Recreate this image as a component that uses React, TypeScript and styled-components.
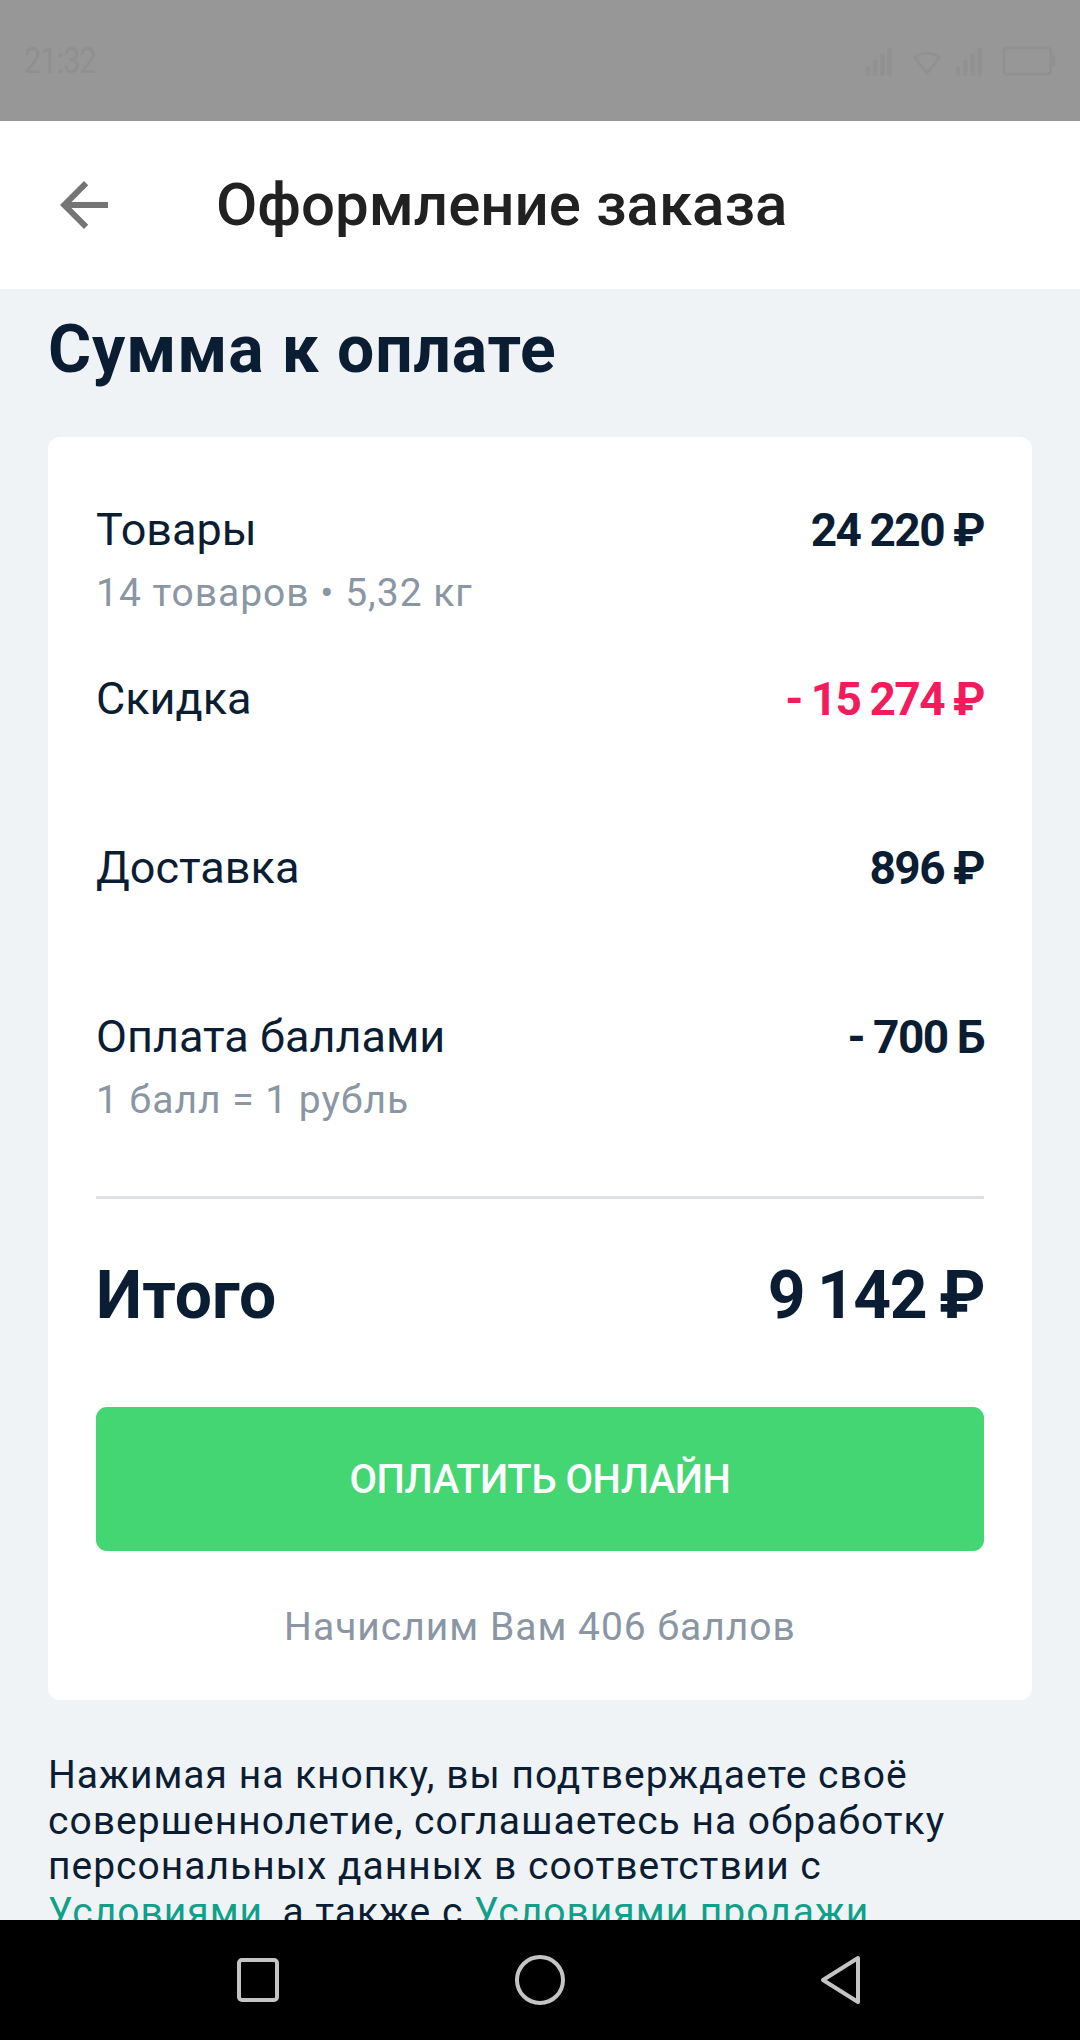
import React from "react";
import styled, { createGlobalStyle } from "styled-components";

const GlobalStyle = createGlobalStyle`
  * { box-sizing: border-box; }
  html, body { margin: 0; padding: 0; background: #eff3f6; }
  body { font-family: Roboto, "Noto Sans", "Liberation Sans", sans-serif; -webkit-font-smoothing: antialiased; }
`;

const NAVY = "#0b1d33";
const GRAY = "#8a96a3";

const Screen = styled.div`
  width: 1080px;
  height: 2040px;
  display: flex;
  flex-direction: column;
  background: #eff3f6;
  overflow: hidden;
`;

const StatusBar = styled.div`
  height: 121px;
  flex: none;
  background: #979797;
  display: flex;
  align-items: center;
  justify-content: space-between;
  padding: 0 22px 0 24px;
`;

const StatusTime = styled.span`
  font-family: "Roboto", sans-serif;
  font-size: 36px;
  color: #909090;
  letter-spacing: -1px;
  transform: scaleX(0.85);
  transform-origin: left center;
`;

const StatusIcons = styled.div`
  display: flex;
  align-items: center;
  gap: 12px;
`;

const Header = styled.header`
  height: 168px;
  flex: none;
  background: #ffffff;
  display: flex;
  align-items: center;
  padding-left: 48px;
`;

const BackButton = styled.div`
  width: 72px;
  height: 72px;
  display: flex;
  align-items: center;
  justify-content: center;
  margin-right: 96px;
`;

const HeaderTitle = styled.h1`
  margin: 0;
  font-family: Roboto, sans-serif;
  font-weight: 500;
  font-size: 60px;
  line-height: 72px;
  color: #212121;
`;

const Content = styled.main`
  flex: 1;
  min-height: 0;
  overflow: hidden;
  padding: 22px 48px 0;
  display: flex;
  flex-direction: column;
`;

const SectionTitle = styled.h2`
  margin: 0;
  font-weight: 700;
  font-size: 66px;
  line-height: 78px;
  letter-spacing: 0.9px;
  color: ${NAVY};
`;

const Card = styled.section`
  margin-top: 48px;
  background: #ffffff;
  border-radius: 12px;
  padding: 65px 48px 47px;
  display: flex;
  flex-direction: column;
`;

const Rows = styled.div`
  display: flex;
  flex-direction: column;
  gap: 52px;
`;

const Row = styled.div`
  display: grid;
  grid-template-columns: 1fr auto;
  column-gap: 24px;
`;

const RowLabel = styled.div`
  font-size: 45px;
  line-height: 56px;
  font-weight: 400;
  color: ${NAVY};
`;

const RowValue = styled.div<{ $tone?: "discount" }>`
  font-size: 46px;
  line-height: 56px;
  font-weight: 700;
  letter-spacing: -1.5px;
  word-spacing: -1px;
  text-align: right;
  white-space: nowrap;
  color: ${(p) => (p.$tone === "discount" ? "#f21b5b" : NAVY)};
`;

const RowSub = styled.div`
  grid-column: 1 / 2;
  margin-top: 9px;
  min-height: 52px;
  font-size: 39px;
  line-height: 52px;
  letter-spacing: 1px;
  color: ${GRAY};
`;

const Divider = styled.hr`
  margin: 70px 0 0;
  border: none;
  height: 3px;
  background: #dde1e5;
`;

const TotalRow = styled.div`
  margin-top: 57px;
  display: flex;
  justify-content: space-between;
  align-items: baseline;
`;

const TotalText = styled.span<{ $num?: boolean }>`
  font-size: 66px;
  line-height: 80px;
  font-weight: 700;
  color: ${NAVY};
  white-space: nowrap;
  letter-spacing: ${(p) => (p.$num ? "-1.5px" : "0")};
  word-spacing: ${(p) => (p.$num ? "-2px" : "0")};
`;

const PayButton = styled.button`
  margin-top: 71px;
  height: 144px;
  width: 100%;
  border: none;
  border-radius: 11px;
  background: #43d672;
  color: #ffffff;
  font-family: Roboto, sans-serif;
  font-weight: 500;
  font-size: 40px;
  letter-spacing: -0.5px;
  text-transform: uppercase;
  display: flex;
  align-items: center;
  justify-content: center;
  cursor: pointer;
`;

const BonusNote = styled.p`
  margin: 50px 0 0;
  text-align: center;
  font-size: 39px;
  line-height: 52px;
  letter-spacing: 1px;
  color: ${GRAY};
`;

const Legal = styled.p`
  margin: 53px 0 0;
  font-size: 39px;
  line-height: 45.7px;
  letter-spacing: 1px;
  color: ${NAVY};
`;

const LegalLink = styled.a`
  color: #0fa08a;
  text-decoration: none;
`;

const NavBar = styled.nav`
  height: 120px;
  flex: none;
  background: #000000;
  display: flex;
  align-items: center;
  padding-left: 234px;
`;

const NavKey = styled.div<{ $w: number; $gap: number }>`
  width: ${(p) => p.$w}px;
  height: 56px;
  margin-left: ${(p) => p.$gap}px;
  display: flex;
  align-items: center;
  justify-content: center;
`;

type Line = {
  label: string;
  value: string;
  sub?: string;
  tone?: "discount";
};

const lines: Line[] = [
  { label: "Товары", sub: "14 товаров • 5,32 кг", value: "24 220 ₽" },
  { label: "Скидка", value: "- 15 274 ₽", tone: "discount" },
  { label: "Доставка", value: "896 ₽" },
  { label: "Оплата баллами", sub: "1 балл = 1 рубль", value: "- 700 Б" },
];

const ICON = "#919191";

export default function App() {
  return (
    <>
      <GlobalStyle />
      <Screen>
        <StatusBar>
          <StatusTime>21:32</StatusTime>
          <StatusIcons>
            <svg width="36" height="36" viewBox="0 0 40 36">
              <rect x="2" y="24" width="5" height="10" fill={ICON} />
              <rect x="10" y="17" width="5" height="17" fill={ICON} />
              <rect x="18" y="10" width="5" height="24" fill={ICON} />
              <rect x="26" y="3" width="5" height="31" fill={ICON} />
            </svg>
            <svg width="30" height="36" viewBox="0 0 34 36">
              <path d="M17 32 L3 14 A22 22 0 0 1 31 14 Z" fill="none" stroke={ICON} strokeWidth="3" />
            </svg>
            <svg width="36" height="36" viewBox="0 0 40 36">
              <rect x="2" y="24" width="5" height="10" fill={ICON} />
              <rect x="10" y="17" width="5" height="17" fill={ICON} />
              <rect x="18" y="10" width="5" height="24" fill={ICON} />
              <rect x="26" y="3" width="5" height="31" fill={ICON} />
            </svg>
            <svg width="56" height="36" viewBox="0 0 60 36">
              <rect x="2" y="4" width="50" height="28" rx="3" fill="none" stroke={ICON} strokeWidth="3" />
              <rect x="53" y="12" width="4" height="12" fill={ICON} />
            </svg>
          </StatusIcons>
        </StatusBar>

        <Header>
          <BackButton>
            <svg width="72" height="72" viewBox="0 0 24 24">
              <path d="M20 11H7.83l5.59-5.59L12 4l-8 8 8 8 1.41-1.41L7.83 13H20v-2z" fill="#757575" />
            </svg>
          </BackButton>
          <HeaderTitle>Оформление заказа</HeaderTitle>
        </Header>

        <Content>
          <SectionTitle>Сумма к оплате</SectionTitle>
          <Card>
            <Rows>
              {lines.map((l) => (
                <Row key={l.label}>
                  <RowLabel>{l.label}</RowLabel>
                  <RowValue $tone={l.tone}>{l.value}</RowValue>
                  <RowSub>{l.sub ?? ""}</RowSub>
                </Row>
              ))}
            </Rows>
            <Divider />
            <TotalRow>
              <TotalText>Итого</TotalText>
              <TotalText $num>9 142 ₽</TotalText>
            </TotalRow>
            <PayButton>Оплатить онлайн</PayButton>
            <BonusNote>Начислим Вам 406 баллов</BonusNote>
          </Card>
          <Legal>
            Нажимая на кнопку, вы подтверждаете своё совершеннолетие, соглашаетесь на обработку
            персональных данных в соответствии с <LegalLink>Условиями</LegalLink>, а также с{" "}
            <LegalLink>Условиями продажи</LegalLink> товаров и правилами программы лояльности.
          </Legal>
        </Content>

        <NavBar>
          <NavKey $w={48} $gap={0}>
            <svg width="44" height="46" viewBox="0 0 44 46">
              <rect x="3" y="3" width="38" height="40" rx="3" fill="none" stroke="#c4c4c4" strokeWidth="4" />
            </svg>
          </NavKey>
          <NavKey $w={56} $gap={230}>
            <svg width="54" height="54" viewBox="0 0 54 54">
              <circle cx="27" cy="27" r="23" fill="none" stroke="#c4c4c4" strokeWidth="4" />
            </svg>
          </NavKey>
          <NavKey $w={46} $gap={250}>
            <svg width="44" height="50" viewBox="0 0 44 50">
              <path d="M4 25 L39 3 L39 47 Z" fill="none" stroke="#c4c4c4" strokeWidth="4" strokeLinejoin="round" />
            </svg>
          </NavKey>
        </NavBar>
      </Screen>
    </>
  );
}
